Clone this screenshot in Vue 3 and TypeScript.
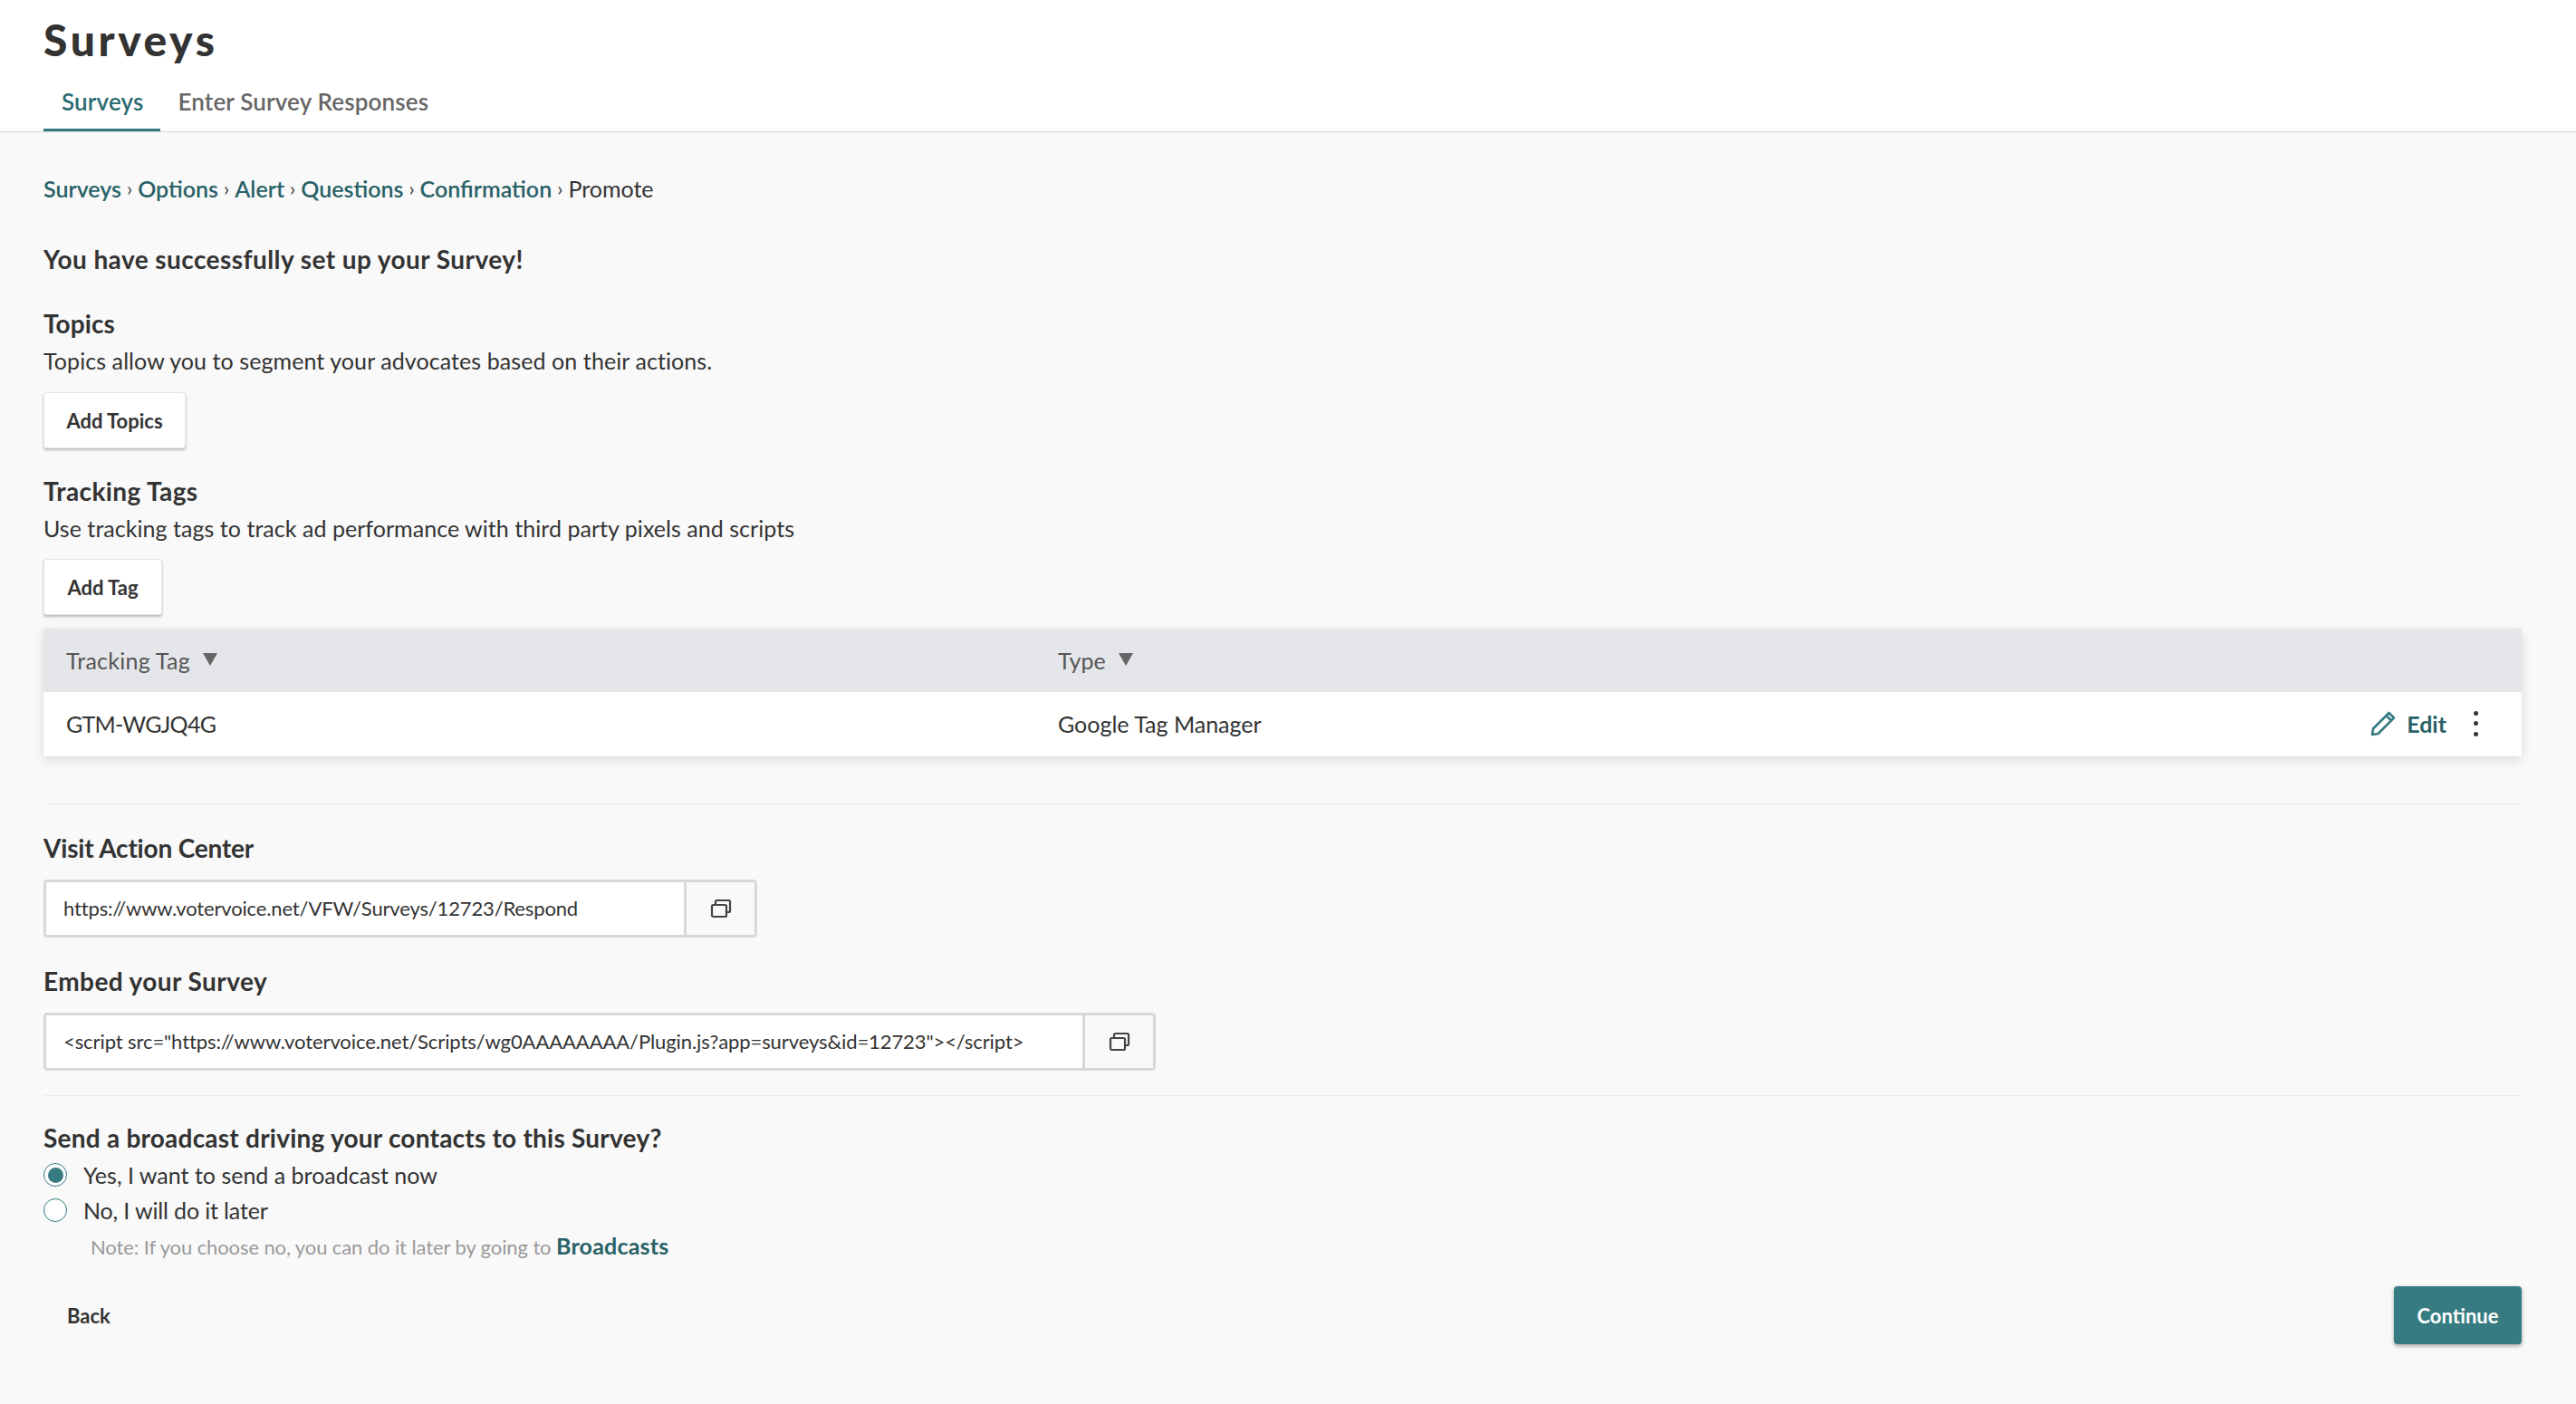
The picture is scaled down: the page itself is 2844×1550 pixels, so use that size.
<script setup lang="ts">
const crumbs: string[] = ['Surveys', 'Options', 'Alert', 'Questions', 'Confirmation']
const actionUrl = 'https://www.votervoice.net/VFW/Surveys/12723/Respond'
const embedCode = '<script src="https://www.votervoice.net/Scripts/wg0AAAAAAAA/Plugin.js?app=surveys&id=12723"><' + '/script>'
</script>

<template>
  <div class="page">
    <header class="head">
      <h1 class="title">Surveys</h1>
      <nav class="tabs">
        <a class="tab active">Surveys</a>
        <a class="tab">Enter Survey Responses</a>
      </nav>
    </header>
    <main class="main">
      <div class="crumbs">
        <template v-for="c in crumbs" :key="c">
          <a class="link">{{ c }}</a><span class="sep">›</span>
        </template>
        <span>Promote</span>
      </div>
      <h2 class="success">You have successfully set up your Survey!</h2>

      <h3 class="h topics">Topics</h3>
      <p class="desc d1">Topics allow you to segment your advocates based on their actions.</p>
      <button class="btn b1">Add Topics</button>

      <h3 class="h tags">Tracking Tags</h3>
      <p class="desc d2">Use tracking tags to track ad performance with third party pixels and scripts</p>
      <button class="btn b2">Add Tag</button>

      <div class="table">
        <div class="row thead">
          <div class="col1">Tracking Tag<i class="tri"></i></div>
          <div class="col2">Type<i class="tri"></i></div>
        </div>
        <div class="row tbody">
          <div class="col1 code">GTM-WGJQ4G</div>
          <div class="col2">Google Tag Manager</div>
          <div class="actions">
            <svg class="pencil" width="28" height="28" viewBox="0 0 28 28" fill="none" stroke="#377b82" stroke-width="2.6" stroke-linejoin="round">
              <path d="M2 26 L3 19.5 L20.5 2 L26 7.5 L8.5 25 Z" />
              <path d="M17.5 5 L23 10.5" />
            </svg>
            <a class="edit">Edit</a>
            <span class="dots"><b></b><b></b><b></b></span>
          </div>
        </div>
      </div>

      <hr class="rule r1" />

      <h3 class="h visit">Visit Action Center</h3>
      <div class="copy c1">
        <input class="field" readonly :value="actionUrl" />
        <button class="copybtn" aria-label="Copy">
          <svg width="24" height="24" viewBox="0 0 24 24" fill="none" stroke="#444" stroke-width="2.2">
            <rect x="2" y="8" width="16" height="13" rx="1.5" />
            <path d="M6 8 V4.5 A1.5 1.5 0 0 1 7.5 3 H20.5 A1.5 1.5 0 0 1 22 4.5 V14.5 A1.5 1.5 0 0 1 20.5 16 H18" />
          </svg>
        </button>
      </div>

      <h3 class="h embed">Embed your Survey</h3>
      <div class="copy c2">
        <input class="field" readonly :value="embedCode" />
        <button class="copybtn" aria-label="Copy">
          <svg width="24" height="24" viewBox="0 0 24 24" fill="none" stroke="#444" stroke-width="2.2">
            <rect x="2" y="8" width="16" height="13" rx="1.5" />
            <path d="M6 8 V4.5 A1.5 1.5 0 0 1 7.5 3 H20.5 A1.5 1.5 0 0 1 22 4.5 V14.5 A1.5 1.5 0 0 1 20.5 16 H18" />
          </svg>
        </button>
      </div>

      <hr class="rule r2" />

      <h3 class="h send">Send a broadcast driving your contacts to this Survey?</h3>
      <label class="radio yes"><span class="dot on"></span>Yes, I want to send a broadcast now</label>
      <label class="radio no"><span class="dot"></span>No, I will do it later</label>
      <p class="note">Note: If you choose no, you can do it later by going to <a class="link big">Broadcasts</a></p>

      <div class="foot">
        <button class="back">Back</button>
        <button class="continue">Continue</button>
      </div>
    </main>
  </div>
</template>

<style>
html, body { margin: 0; background: #f9f9f9; }
</style>

<style scoped>
.page {
  min-height: 1550px;
  background: #f9f9f9;
  color: #333;
  font-family: Lato, "Liberation Sans", sans-serif;
  font-size: 25px;
  box-sizing: border-box;
}
.head {
  height: 146px;
  box-sizing: border-box;
  background: #fff;
  border-bottom: 1px solid #d6d6d6;
  padding: 14px 0 0 48px;
}
.title {
  margin: 0;
  font-size: 48px;
  line-height: 60px;
  font-weight: 900;
  color: #333;
  letter-spacing: 3.6px;
}
.tabs { display: flex; }
.tab {
  padding: 20px 19px 12px;
  line-height: 36px;
  font-size: 26px;
  font-weight: 600;
  color: #666;
  border-bottom: 3px solid transparent;
  letter-spacing: 0.15px;
}
.tab.active { padding-left: 20px; color: #2a6a70; border-bottom-color: #377b82; }
.main { padding: 44px 60px 0 48px; }
.crumbs { line-height: 36px; font-size: 25px; display: flex; }
.crumbs .link { font-weight: 600; }
.link { color: #286167; font-weight: 500; }
.sep { margin: 0 6px; color: #444; font-size: 22px; }
.success {
  margin: 42px 0 0;
  font-size: 28px;
  line-height: 36px;
  font-weight: 700;
  color: #333;
  letter-spacing: 0.43px;
}
.h {
  margin: 0;
  font-size: 28px;
  line-height: 36px;
  font-weight: 700;
  color: #333;
}
.topics { margin-top: 35px; letter-spacing: 0.1px; }
.tags { margin-top: 29px; letter-spacing: 0.38px; }
.visit { margin-top: 30px; letter-spacing: -0.18px; }
.embed { margin-top: 30px; letter-spacing: 0.42px; }
.send { margin-top: 28px; letter-spacing: 0.23px; }
.desc { margin: 0; line-height: 36px; font-size: 25px; letter-spacing: 0.08px; }
.d1 { margin-top: 5px; }
.d2 { margin-top: 5px; letter-spacing: 0.04px; }
.btn {
  display: block;
  height: 62px;
  box-sizing: border-box;
  padding: 0;
  white-space: nowrap;
  background: #fff;
  border: 1px solid #e4e4e4;
  border-radius: 3px;
  box-shadow: 0 2px 3px rgba(0, 0, 0, 0.25);
  font: 700 22px Lato, "Liberation Sans", sans-serif;
  color: #333;
}
.b1 { margin-top: 17px; width: 157px; }
.b2 { margin-top: 16px; width: 131px; }
.table {
  margin-top: 15px;
  box-shadow: 0 4px 12px rgba(0, 0, 0, 0.13);
  background: #fff;
}
.row { display: flex; align-items: center; padding-left: 25px; position: relative; }
.thead { height: 70px; background: #e5e6ea; color: #555; }
.tbody { height: 71px; box-sizing: border-box; padding-bottom: 2px; background: #fff; }
.col1 { width: 1095px; display: flex; align-items: center; }
.col2 { display: flex; align-items: center; }
.code { letter-spacing: -0.7px; }
.thead .col1 { letter-spacing: 0.25px; }
.tri {
  display: inline-block;
  margin-left: 14px;
  margin-top: -2px;
  border-left: 8px solid transparent;
  border-right: 8px solid transparent;
  border-top: 14px solid #666;
}
.actions {
  margin-left: auto;
  padding-right: 48px;
  display: flex;
  align-items: center;
}
.pencil { margin-right: 12px; }
.edit { color: #286167; font-weight: 700; }
.dots {
  margin-left: 30px;
  display: flex;
  flex-direction: column;
  gap: 6.5px;
}
.dots b { width: 5px; height: 5px; border-radius: 50%; background: #333; }
.rule { margin: 0; border: 0; border-top: 1px solid #ececec; }
.r1 { margin-top: 52px; }
.r2 { margin-top: 27px; }
.copy {
  display: flex;
  height: 64px;
  box-sizing: border-box;
  border: 3px solid #d8d8d8;
  border-radius: 4px;
  margin-top: 17px;
}
.c1 { width: 788px; }
.c2 { width: 1228px; }
.field {
  flex: 1;
  min-width: 0;
  border: 0;
  outline: 0;
  background: #fff;
  padding: 0 0 2px 19px;
  font: 400 22px Lato, "Liberation Sans", sans-serif;
  letter-spacing: -0.15px;
  color: #333;
}
.c2 .field { letter-spacing: -0.09px; }
.copybtn {
  width: 78px;
  flex: none;
  background: #f9f9f9;
  border: 0;
  border-left: 3px solid #d8d8d8;
  padding: 0;
  display: flex;
  align-items: center;
  justify-content: center;
}
.radio { display: flex; align-items: center; line-height: 36px; font-size: 25px; }
.yes { margin-top: 5px; }
.no { margin-top: 3px; letter-spacing: -0.15px; }
.dot {
  width: 26px;
  height: 26px;
  box-sizing: border-box;
  border: 1.5px solid #377b82;
  border-radius: 50%;
  background: #fff;
  margin-right: 18px;
  position: relative;
}
.dot.on::after {
  content: "";
  position: absolute;
  inset: 3.5px;
  border-radius: 50%;
  background: #377b82;
}
.note {
  margin: 6px 0 0 52px;
  line-height: 30px;
  font-size: 22px;
  letter-spacing: -0.1px;
  color: #999;
}
.big { font-size: 25px; font-weight: 700; letter-spacing: 0.2px; }
.foot {
  margin-top: 28px;
  display: flex;
  justify-content: space-between;
  align-items: center;
}
.back {
  padding: 0 26px;
  height: 64px;
  background: none;
  border: 0;
  font: 700 22px Lato, "Liberation Sans", sans-serif;
  color: #333;
}
.continue {
  width: 141px;
  height: 64px;
  background: #377b82;
  border: 0;
  border-radius: 4px;
  box-shadow: 0 2px 4px rgba(0, 0, 0, 0.35);
  font: 700 22px Lato, "Liberation Sans", sans-serif;
  color: #fff;
}
</style>
